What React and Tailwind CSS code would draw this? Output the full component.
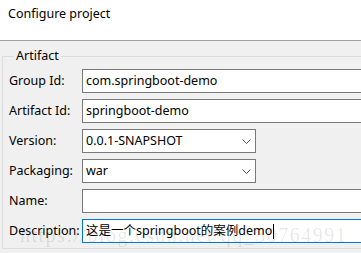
import React from "react";

const font = { fontFamily: '"Noto Sans", "Noto Sans CJK SC", sans-serif' };

function Chevron() {
  return (
    <svg width="9" height="5" viewBox="0 0 9 5" className="shrink-0">
      <polyline points="0.5,0.5 4.5,4.5 8.5,0.5" fill="none" stroke="#5a5a5a" strokeWidth="1" />
    </svg>
  );
}

function TextRow({ label, value, active }) {
  return (
    <div className="flex items-center h-[24px]">
      <div className="w-[73px] shrink-0 text-[12.5px] leading-none text-black whitespace-nowrap">{label}</div>
      <div
        className={
          "flex-1 h-[24px] bg-white border flex items-center pl-[3px] text-[12.5px] text-black " +
          (active ? "border-[#0078d7]" : "border-[#7a7a7a]")
        }
      >
        <span className="whitespace-nowrap">{value}</span>
        {active && <span className="w-[1px] h-[15px] bg-black ml-[1px]" />}
      </div>
    </div>
  );
}

function SelectRow({ label, value }) {
  return (
    <div className="flex items-center h-[24px]">
      <div className="w-[73px] shrink-0 text-[12.5px] leading-none text-black whitespace-nowrap">{label}</div>
      <div className="w-[174px] h-[24px] bg-white border border-[#7a7a7a] flex items-center justify-between pl-[3px] pr-[4px] text-[12.5px] text-black">
        <span className="whitespace-nowrap">{value}</span>
        <Chevron />
      </div>
    </div>
  );
}

export default function App() {
  return (
    <div className="relative w-[361px] h-[253px] overflow-hidden bg-[#f0f0f0]" style={font}>
      <div className="h-[41px] bg-white border-b border-[#a0a0a0] pl-[8px] pt-[5px] text-[12.5px] text-black">
        Configure project
      </div>
      <fieldset className="ml-[2px] mt-[5px] w-[420px] border border-[#dcdcdc] pl-[6px] pt-[3px] h-[203px]">
        <legend className="ml-[5px] px-[2px] text-[12.5px] leading-[20px] text-black">Artifact</legend>
        <div className="flex flex-col gap-[6px]">
          <TextRow label="Group Id:" value="com.springboot-demo" />
          <TextRow label="Artifact Id:" value="springboot-demo" />
          <SelectRow label="Version:" value="0.0.1-SNAPSHOT" />
          <SelectRow label="Packaging:" value="war" />
          <TextRow label="Name:" value="" />
          <TextRow label="Description:" value="这是一个springboot的案例demo" active />
        </div>
      </fieldset>
      <div
        className="absolute left-[20px] top-[220px] whitespace-nowrap text-[20px] tracking-[1.5px] text-black/10 pointer-events-none"
        style={{ fontFamily: '"Liberation Serif", serif' }}
      >
        https://blog.csdn.net/qq_30764991
      </div>
    </div>
  );
}
